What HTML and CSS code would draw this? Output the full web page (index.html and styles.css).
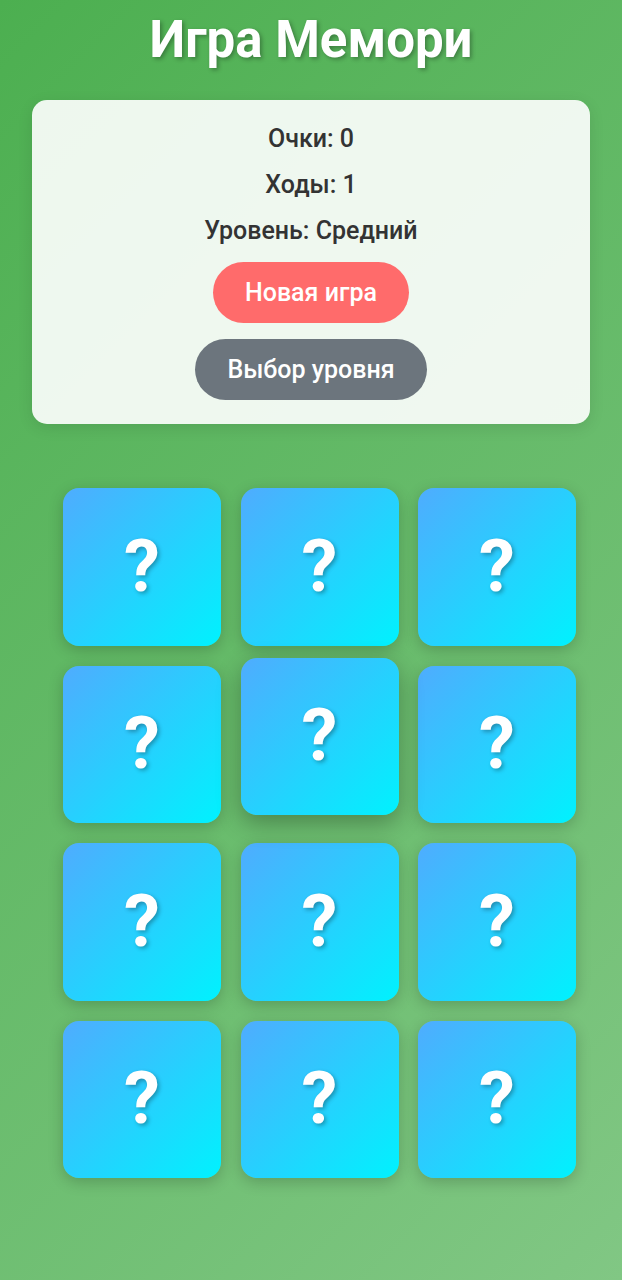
FILE: index.html
```html
<!DOCTYPE html>
<html lang="ru">
<head>
<meta charset="utf-8">
<title>Игра Мемори</title>
<link rel="stylesheet" href="styles.css">
</head>
<body>
<div class="app">
  <h1 class="title">Игра Мемори</h1>
  <div class="panel">
    <div class="stat">Очки: 0</div>
    <div class="stat">Ходы: 1</div>
    <div class="stat">Уровень: Средний</div>
    <button class="btn btn-new">Новая игра</button>
    <button class="btn btn-level">Выбор уровня</button>
  </div>
  <div class="board">
    <div class="card"><span>?</span></div>
    <div class="card"><span>?</span></div>
    <div class="card"><span>?</span></div>
    <div class="card"><span>?</span></div>
    <div class="card card-hover"><span>?</span></div>
    <div class="card"><span>?</span></div>
    <div class="card"><span>?</span></div>
    <div class="card"><span>?</span></div>
    <div class="card"><span>?</span></div>
    <div class="card"><span>?</span></div>
    <div class="card"><span>?</span></div>
    <div class="card"><span>?</span></div>
  </div>
</div>
</body>
</html>
```
FILE: styles.css
```css
html, body {
  margin: 0;
  padding: 0;
}
body {
  width: 622px;
  min-height: 1280px;
  background: linear-gradient(135deg, #4CAF50 0%, #81C784 100%);
  font-family: Roboto, "Noto Sans", sans-serif;
}
.app {
  display: flex;
  flex-direction: column;
  align-items: center;
  padding: 0 32px;
}
.title {
  margin: 0 0 20px;
  line-height: 79px;
  padding-bottom: 1px;
  font-size: 51px;
  font-weight: 700;
  color: #fff;
  text-shadow: 2px 2px 4px rgba(0, 0, 0, 0.3);
}
.panel {
  box-sizing: border-box;
  width: 558px;
  background: rgba(255, 255, 255, 0.9);
  border-radius: 15px;
  box-shadow: 0 4px 15px rgba(0, 0, 0, 0.1);
  padding: 16px 0 24px;
  display: flex;
  flex-direction: column;
  align-items: center;
}
.stat {
  line-height: 46px;
  font-size: 25px;
  font-weight: 500;
  color: #333;
}
.btn {
  border: none;
  height: 61px;
  border-radius: 31px;
  padding: 0 32px;
  font-family: Roboto, "Noto Sans", sans-serif;
  font-size: 25px;
  font-weight: 500;
  color: #fff;
}
.btn-new {
  margin-top: 8px;
  background: #ff6b6b;
}
.btn-level {
  margin-top: 16px;
  background: #6c757d;
}
.board {
  align-self: stretch;
  margin-top: 64px;
  padding-left: 31px;
  display: grid;
  grid-template-columns: repeat(3, 158px);
  grid-auto-rows: 157.5px;
  column-gap: 19.5px;
  row-gap: 20px;
}
.card {
  border-radius: 16px;
  background: linear-gradient(135deg, #4facfe 0%, #00f2fe 100%);
  box-shadow: 0 4px 15px rgba(0, 0, 0, 0.2);
  display: flex;
  align-items: center;
  justify-content: center;
}
.card span {
  font-size: 72px;
  font-weight: 700;
  color: #fff;
  line-height: 1;
  text-shadow: 2px 2px 4px rgba(0, 0, 0, 0.3);
}
.card-hover {
  transform: translateY(-8px);
  box-shadow: 0 8px 25px rgba(0, 0, 0, 0.3);
}
```
